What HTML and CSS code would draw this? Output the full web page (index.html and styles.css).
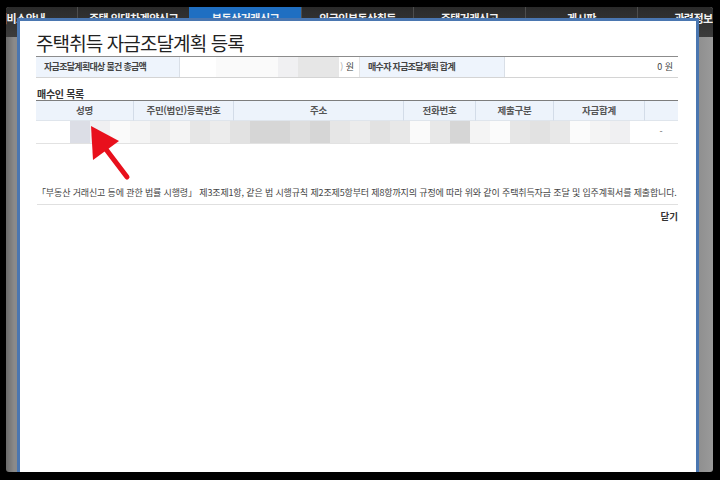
FILE: index.html
```html
<!DOCTYPE html>
<html lang="ko">
<head>
<meta charset="utf-8">
<title>주택취득 자금조달계획 등록</title>
<link rel="stylesheet" href="styles.css">
</head>
<body>
<div class="frame">
  <nav class="gnb">
    <span class="tab tab-first">서비스안내</span>
    <span class="tab">주택 임대차계약신고</span>
    <span class="tab active">부동산거래신고</span>
    <span class="tab">외국인부동산취득</span>
    <span class="tab">주택거래신고</span>
    <span class="tab">게시판</span>
    <span class="tab">관련정보</span>
  </nav>
  <div class="modal">
    <h1 class="title">주택취득 자금조달계획 등록</h1>
    <div class="sum">
      <div class="sum-label">자금조달계획대상 물건 총금액</div>
      <div class="sum-val">
        <span class="blk w62 s-c"></span><span class="blk w20 s-b"></span><span class="blk w41 s-f"></span>
        <span class="paren">)</span>&nbsp;원
      </div>
      <div class="sum-label">매수자 자금조달계획 합계</div>
      <div class="sum-val">0 원</div>
    </div>
    <h2 class="sub">매수인 목록</h2>
    <div class="grid">
      <div class="th">성명</div>
      <div class="th">주민(법인)등록번호</div>
      <div class="th">주소</div>
      <div class="th">전화번호</div>
      <div class="th">제출구분</div>
      <div class="th">자금합계</div>
      <div class="th"></div>
      <div class="mosaic">
        <span class="sp"></span>
        <span class="blk s-a"></span><span class="blk s-b"></span><span class="blk s-c"></span><span class="blk s-d"></span>
        <span class="blk s-e"></span><span class="blk s-d"></span><span class="blk s-f"></span><span class="blk s-e"></span>
        <span class="blk s-g"></span><span class="blk s-h"></span><span class="blk s-h"></span><span class="blk s-i"></span>
        <span class="blk s-h"></span><span class="blk s-f"></span><span class="blk s-e"></span><span class="blk s-g"></span>
        <span class="blk s-j"></span><span class="blk s-c"></span><span class="blk s-j"></span><span class="blk s-h"></span>
        <span class="blk s-d"></span><span class="blk s-k"></span><span class="blk s-f"></span><span class="blk s-g"></span>
        <span class="blk s-j"></span><span class="blk s-k"></span><span class="blk s-d"></span><span class="blk s-b"></span>
      </div>
      <div class="td-last">-</div>
    </div>
    <p class="note">「부동산 거래신고 등에 관한 법률 시행령」 제3조제1항, 같은 법 시행규칙 제2조제5항부터 제8항까지의 규정에 따라 위와 같이 주택취득자금 조달 및 입주계획서를 제출합니다.</p>
    <div class="actions"><span class="close">닫기</span></div>
    <svg class="arrow" width="50" height="62" viewBox="0 0 50 62" aria-hidden="true">
      <line x1="20" y1="28" x2="42" y2="57" stroke="#e8101c" stroke-width="5" stroke-linecap="round"/>
      <polygon points="6,6 8,40 34,21" fill="#e8101c"/>
    </svg>
  </div>
</div>
</body>
</html>
```

FILE: styles.css
```css
html, body {
  margin: 0;
  background: #000;
  font-family: "Noto Sans CJK KR", "Noto Sans", sans-serif;
}

.frame {
  position: relative;
  margin: 7px 0 0 6px;
  width: 707px;
  height: 465px;
  overflow: hidden;
  background: linear-gradient(90deg, #6a6a6a 0, #8a8a8a 8px, #8a8a8a 97%, #9a9a9a 100%);
  border-radius: 3px;
}

.gnb {
  display: flex;
  height: 30px;
  background: linear-gradient(180deg, #2a2a2a, #3c3c3c);
  line-height: 22px;
}

.tab {
  flex: none;
  width: 112px;
  box-sizing: border-box;
  text-align: center;
  color: #f2f2f2;
  font-size: 11px;
  font-weight: bold;
  letter-spacing: -0.5px;
  white-space: nowrap;
  border-left: 1px solid #4d4d4d;
}

.tab-first {
  margin-left: -41px;
  border-left: 0;
}

.active {
  background: #1f6fc2;
  border-left-color: #1f6fc2;
}

.modal {
  position: absolute;
  left: 11px;
  top: 11px;
  width: 682px;
  height: 470px;
  box-sizing: border-box;
  border: 3px solid #4a76b0;
  background: #fff;
  padding: 0 18px 0 16px;
}

.title {
  margin: 11px 0 0;
  font-size: 19px;
  line-height: 22px;
  font-weight: normal;
  color: #222;
  letter-spacing: -0.9px;
}

.sum {
  display: grid;
  grid-template-columns: 144px 180px 145px 1fr;
  height: 20px;
  margin-top: 2px;
  border-top: 1px solid #8c8c8c;
  border-bottom: 1px solid #d4d4d4;
}

.sum-label {
  background: #eef4fc;
  font-size: 9px;
  font-weight: bold;
  color: #444;
  padding-left: 8px;
  line-height: 20px;
  letter-spacing: -0.7px;
  border-right: 1px solid #d9dfe7;
  white-space: nowrap;
}

.sum-val {
  display: flex;
  justify-content: flex-end;
  align-items: stretch;
  font-size: 9px;
  color: #444;
  line-height: 20px;
  padding-right: 5px;
  border-right: 1px solid #e4e4e4;
}

.sum-val:last-child {
  border-right: 0;
}

.paren {
  color: #aaa;
  padding-left: 1px;
}

.sub {
  margin: 10px 0 0 1px;
  font-size: 10px;
  font-weight: bold;
  color: #333;
  line-height: 12px;
  letter-spacing: -0.3px;
}

.grid {
  display: grid;
  grid-template-columns: 97px 100px 170px 72px 78px 91px 1fr;
  border-top: 1px solid #7d7d7d;
}

.th {
  height: 19px;
  line-height: 19px;
  background: #edf3fb;
  text-align: center;
  font-size: 9.5px;
  font-weight: bold;
  color: #555;
  letter-spacing: -0.3px;
  border-left: 1px solid #d3dce8;
  border-bottom: 1px solid #dfe5ec;
  white-space: nowrap;
}

.th:first-child {
  border-left: 0;
}

.mosaic {
  grid-column: 1 / 7;
  display: flex;
  height: 22px;
  border-bottom: 1px solid #e2e2e2;
}

.sp {
  flex: none;
  width: 34px;
}

.blk {
  flex: none;
  width: 20px;
}

.w62 { width: 62px; }
.w20 { width: 20px; }
.w41 { width: 41px; }

.s-a { background: #dcdee6; }
.s-b { background: #f0f0f2; }
.s-c { background: #fafafa; }
.s-d { background: #f4f4f4; }
.s-e { background: #ececec; }
.s-f { background: #e6e6e6; }
.s-g { background: #e2e2e2; }
.s-h { background: #d6d6d6; }
.s-i { background: #dedede; }
.s-j { background: #e8e8e8; }
.s-k { background: #fbfbfb; }

.td-last {
  height: 22px;
  line-height: 22px;
  text-align: center;
  font-size: 9px;
  color: #666;
  border-bottom: 1px solid #e2e2e2;
}

.note {
  margin: 43px 0 0 1px;
  padding-bottom: 5px;
  font-size: 9px;
  line-height: 12px;
  letter-spacing: -0.14px;
  color: #444;
  white-space: nowrap;
  border-bottom: 1px solid #e0e0e0;
}

.actions {
  text-align: right;
  padding-top: 5px;
  font-size: 9.5px;
  line-height: 12px;
}

.close {
  font-weight: bold;
  color: #333;
}

.arrow {
  position: absolute;
  left: 65px;
  top: 99px;
}
```
